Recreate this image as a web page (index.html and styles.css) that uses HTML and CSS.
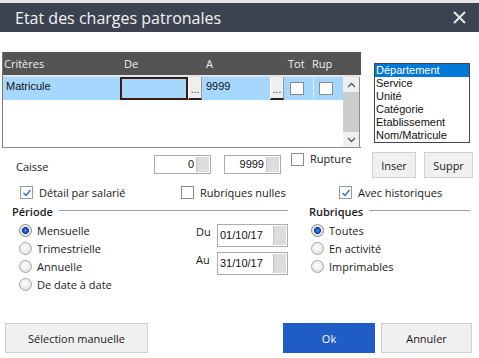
FILE: index.html
```html
<!DOCTYPE html>
<html lang="fr">
<head>
<meta charset="utf-8">
<title>Etat des charges patronales</title>
<link rel="stylesheet" href="styles.css">
</head>
<body>
<div class="window">
  <header class="titlebar">
    <span class="title">Etat des charges patronales</span>
    <svg class="close" width="13" height="13" viewBox="0 0 13 13"><path d="M1 1 L12 12 M12 1 L1 12" stroke="#e6e6e6" stroke-width="2" fill="none"/></svg>
  </header>

  <section class="top">
    <div class="grid">
      <div class="grid-head">
        <span class="h-crit">Critères</span>
        <span class="h-de">De</span>
        <span class="h-a">A</span>
        <span class="h-tot">Tot</span>
        <span class="h-rup">Rup</span>
      </div>
      <div class="grid-sep"></div>
      <div class="grid-body">
        <div class="rows">
          <div class="row">
            <span class="c-crit">Matricule</span>
            <span class="c-de"></span>
            <span class="c-btn">...</span>
            <span class="c-a">9999</span>
            <span class="c-btn">...</span>
            <span class="c-tot"><span class="cell-box"></span></span>
            <span class="c-rup"><span class="cell-box"></span></span>
          </div>
        </div>
        <div class="vscroll">
          <div class="sb-arrow"><svg width="9" height="6" viewBox="0 0 9 6"><polyline points="1,5 4.5,1.5 8,5" stroke="#555" stroke-width="1.3" fill="none"/></svg></div>
          <div class="sb-thumb"></div>
          <div class="sb-arrow"><svg width="9" height="6" viewBox="0 0 9 6"><polyline points="1,1 4.5,4.5 8,1" stroke="#555" stroke-width="1.3" fill="none"/></svg></div>
        </div>
      </div>
    </div>
    <ul class="listbox">
      <li class="sel">Département</li>
      <li>Service</li>
      <li>Unité</li>
      <li>Catégorie</li>
      <li>Etablissement</li>
      <li>Nom/Matricule</li>
    </ul>
  </section>

  <section class="caisse-row">
    <span class="caisse-label">Caisse</span>
    <span class="field num f1"><span class="val">0</span><span class="fbtn">...</span></span>
    <span class="field num f2"><span class="val">9999</span><span class="fbtn">...</span></span>
    <label class="check rupture"><span class="box"></span><span>Rupture</span></label>
    <button class="btn inser">Inser</button>
    <button class="btn suppr">Suppr</button>
  </section>

  <section class="options-row">
    <label class="check opt1"><span class="box checked"><svg width="12" height="12" viewBox="0 0 12 12"><polyline points="2.5,6 5,8.5 9.5,3" stroke="#2f6fb8" stroke-width="1.4" fill="none"/></svg></span><span>Détail par salarié</span></label>
    <label class="check opt2"><span class="box"></span><span>Rubriques nulles</span></label>
    <label class="check opt3"><span class="box checked"><svg width="12" height="12" viewBox="0 0 12 12"><polyline points="2.5,6 5,8.5 9.5,3" stroke="#2f6fb8" stroke-width="1.4" fill="none"/></svg></span><span>Avec historiques</span></label>
  </section>

  <section class="groups">
    <div class="group periode">
      <div class="group-head"><span class="group-title">Période</span><span class="group-line"></span></div>
      <div class="group-body">
        <div class="radios">
          <label class="radio"><span class="dot on"></span><span>Mensuelle</span></label>
          <label class="radio"><span class="dot"></span><span>Trimestrielle</span></label>
          <label class="radio"><span class="dot"></span><span>Annuelle</span></label>
          <label class="radio"><span class="dot"></span><span>De date à date</span></label>
        </div>
        <div class="dates">
          <div class="date-row du"><span class="date-label">Du</span><span class="field date"><span class="val">01/10/17</span><span class="fbtn">...</span></span></div>
          <div class="date-row au"><span class="date-label">Au</span><span class="field date"><span class="val">31/10/17</span><span class="fbtn">...</span></span></div>
        </div>
      </div>
    </div>
    <div class="group rubriques">
      <div class="group-head"><span class="group-title">Rubriques</span><span class="group-line"></span></div>
      <div class="radios">
        <label class="radio"><span class="dot on"></span><span>Toutes</span></label>
        <label class="radio"><span class="dot"></span><span>En activité</span></label>
        <label class="radio"><span class="dot"></span><span>Imprimables</span></label>
      </div>
    </div>
  </section>

  <footer class="actions">
    <button class="btn selection">Sélection manuelle</button>
    <button class="btn ok">Ok</button>
    <button class="btn annuler">Annuler</button>
  </footer>
</div>
</body>
</html>
```

FILE: styles.css
```css
* { box-sizing: border-box; }
html, body { margin: 0; padding: 0; background: #fff; }
body { width: 479px; height: 358px; overflow: hidden; font-family: "Open Sans", "Noto Sans", sans-serif; font-size: 11px; color: #1a1a1a; }

.window { width: 479px; height: 358px; border-top: 3px solid #e6e6e6; }

.titlebar { height: 29px; background: #3d4250; display: flex; align-items: center; padding-left: 15px; padding-right: 13px; }
.title { color: #f2f2f2; font-size: 16px; flex: 1; line-height: 20px; }
.close { display: block; }

/* top section */
.top { display: flex; align-items: flex-start; margin-top: 20px; }
.grid { margin-left: 2px; width: 359px; height: 96px; border-left: 1px solid #7a7a7a; border-bottom: 1px solid #8a8a8a; display: flex; flex-direction: column; }
.grid-head { height: 23px; background: #545454; color: #f0f0f0; display: flex; align-items: center; font-size: 11px; }
.grid-head span { display: block; }
.h-crit { width: 117px; padding-left: 1px; }
.h-de { width: 82px; padding-left: 4px; }
.h-a { width: 82px; padding-left: 4px; }
.h-tot { width: 26px; padding-left: 4px; }
.h-rup { width: 34px; padding-left: 2px; }
.grid-sep { height: 2px; background: #e4e4e4; margin-right: 1px; }
.grid-body { flex: 1; display: flex; border-right: 1px solid #8a8a8a; margin-right: 1px; }
.rows { flex: 1; }
.row { height: 23px; display: flex; background: #a6d8ff; font-family: "Liberation Sans", Arial, sans-serif; font-size: 11px; color: #111; }
.row > span { display: block; height: 23px; }
.c-crit { width: 117px; padding-left: 3px; padding-top: 3px; }
.c-de { width: 68px; border: 2px solid #3a1c12; }
.c-btn { width: 14px; background: #efefef; border-left: 1px solid #fff; border-bottom: 2px solid #222; border-right: 1px solid #999; font-size: 10px; text-align: center; padding-top: 8px; line-height: 10px; color: #222; }
.c-a { width: 68px; padding-left: 4px; padding-top: 3px; }
.c-tot { width: 30px; padding-left: 6px; padding-top: 5px; border-right: 1px solid #d5ecff; }
.c-rup { width: 29px; padding-left: 5px; padding-top: 5px; }
.cell-box { display: block; width: 14px; height: 13px; background: #fff; border: 1px solid #8a8a8a; }
.vscroll { width: 16px; display: flex; flex-direction: column; background: #f0f0f0; }
.sb-arrow { height: 15px; display: flex; align-items: center; justify-content: center; }
.sb-thumb { flex: 1; background: #cdcdcd; }

.listbox { list-style: none; margin: 11px 0 0 13px; padding: 0; width: 96px; height: 80px; border: 1px solid #444; font-family: "Liberation Sans", Arial, sans-serif; font-size: 11px; color: #111; }
.listbox li { height: 13px; line-height: 13px; padding-left: 1px; }
.listbox li.sel { background: #0078d7; color: #fff; }

/* caisse row */
.caisse-row { display: flex; align-items: flex-start; height: 26px; margin-top: 4px; }
.caisse-label { margin-left: 16px; width: 138px; margin-top: 7px; line-height: 15px; }
.field { display: flex; height: 19px; border: 1px solid #acacac; background: #fff; font-family: "Liberation Sans", Arial, sans-serif; font-size: 11px; color: #111; }
.field .val { flex: 1; line-height: 17px; padding: 0 1px 0 2px; }
.field.num .val { text-align: right; }
.fbtn { width: 13px; background: #dcdcdc; border-left: 1px solid #c4c4c4; color: #f4f4f4; font-size: 9px; text-align: center; line-height: 20px; margin: 1px; }
.f1 { width: 57px; margin-top: 3px; }
.f2 { width: 57px; margin-top: 3px; margin-left: 13px; }
.check { display: flex; align-items: center; }
.box { width: 13px; height: 13px; border: 1px solid #8c8c8c; background: #fff; display: block; flex: none; }
.box svg { display: block; margin: 0; }
.box.checked { border-color: #9a9a9a; }
.rupture { margin-left: 10px; margin-top: 0; line-height: 14px; }
.rupture .box { margin-right: 6px; }

.btn { font-family: "Open Sans", "Noto Sans", sans-serif; font-size: 11px; color: #1a1a1a; background: #f0f0f0; border: 1px solid #d0d0d0; padding: 0; }
.inser { width: 44px; height: 26px; margin-left: auto; }
.suppr { width: 49px; height: 26px; margin-left: 8px; margin-right: 6px; }

/* options row */
.options-row { display: flex; margin-top: 8px; height: 13px; }
.options-row .check .box { margin-right: 6px; }
.opt1 { margin-left: 20px; width: 161px; }
.opt2 { width: 158px; }

/* groups */
.groups { display: flex; margin-top: 5px; }
.group-head { display: flex; align-items: center; height: 15px; }
.group-title { font-weight: 600; color: #1a1a1a; }
.group-line { flex: 1; height: 1px; background: #a0a0a0; margin-left: 6px; margin-top: -2px; }
.periode { margin-left: 12px; width: 276px; }
.rubriques { margin-left: 21px; width: 161px; }
.group-body { display: flex; }
.radios { display: flex; flex-direction: column; margin-top: 2px; }
.periode .radios { width: 185px; padding-left: 7px; }
.rubriques .radios { padding-left: 2px; }
.radio { display: flex; align-items: center; height: 18px; }
.dot { width: 13px; height: 13px; border-radius: 50%; border: 1px solid #a8a8a8; background: radial-gradient(circle at 45% 40%, #ffffff 0, #ebebeb 55%, #d4d4d4 100%); margin-right: 5px; flex: none; }
.dot.on { background: radial-gradient(circle at 50% 50%, #4a8ee0 0, #1b5cbf 2px, #0c3f94 3.2px, #ececec 3.8px, #d6d6d6 100%); border-color: #8a8a8a; }

.dates { display: flex; flex-direction: column; margin-top: 5px; }
.date-row { display: flex; align-items: flex-start; }
.date-row.au { margin-top: 5px; }
.date-label { width: 21px; font-size: 11px; line-height: 14px; margin-top: 1px; }
.field.date { width: 71px; height: 23px; }
.field.date .val { line-height: 21px; padding-left: 2px; }
.field.date .fbtn { width: 13px; line-height: 22px; }

/* actions */
.actions { display: flex; margin-top: 30px; }
.selection { margin-left: 5px; width: 143px; height: 30px; }
.ok { margin-left: 135px; width: 92px; height: 30px; background: #1f5cc6; border-color: #1f5cc6; color: #fff; }
.annuler { margin-left: 6px; width: 91px; height: 30px; }
```
